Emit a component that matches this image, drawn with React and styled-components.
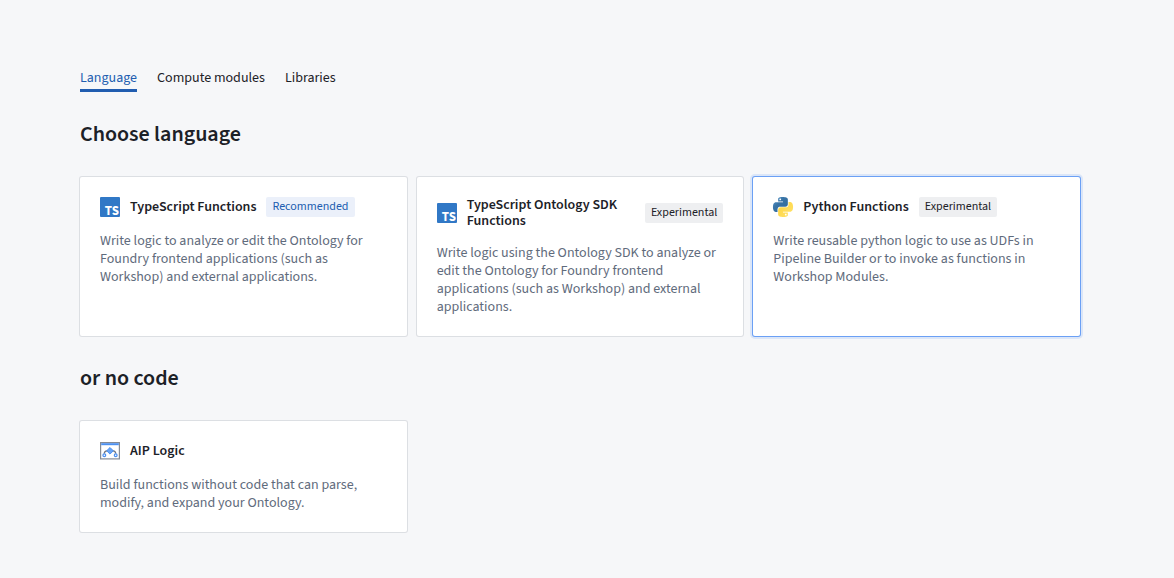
import React, { useState } from "react";
import styled, { createGlobalStyle } from "styled-components";

const GlobalStyle = createGlobalStyle`
	*, *::before, *::after {
		box-sizing: border-box;
	}

	body {
		margin: 0;
		background: #f6f7f9;
		color: #1c2127;
		font-family: "Source Sans 3", "Noto Sans CJK SC", "Open Sans", sans-serif;
		font-size: 14px;
		line-height: 18px;
	}

	button {
		font: inherit;
		color: inherit;
	}
`;

const Page = styled.main`
	padding: 64px 94px 46px 80px;
`;

const TabList = styled.div`
	display: flex;
	gap: 20px;
`;

const Tab = styled.button`
	padding: 0;
	border: 0;
	background: none;
	box-shadow: ${props => (props.$active ? "inset 0 -3px 0 #215db0" : "none")};
	color: ${props => (props.$active ? "#215db0" : "#1c2127")};
	line-height: 28px;
	cursor: pointer;
`;

const Heading = styled.h2`
	margin: 30px 0;
	font-size: 22px;
	font-weight: 600;
	line-height: 25px;
`;

const CardGrid = styled.div`
	display: grid;
	grid-template-columns: repeat(3, minmax(0, 1fr));
	gap: 10px;
`;

const Card = styled.button`
	display: flex;
	flex-direction: column;
	gap: 15px;
	padding: 20px;
	border: 0;
	border-radius: 2px;
	background: #ffffff;
	box-shadow: ${props =>
		props.$selected
			? "0 0 0 1px #6ba0f5, 0 0 0 3px #dbe6f8"
			: "0 0 0 1px #dcdfe3"};
	text-align: left;
	cursor: pointer;
`;

const CardHeader = styled.span`
	display: flex;
	align-items: center;
	gap: 10px;
`;

const IconSlot = styled.span`
	display: flex;
	flex: none;
	width: 20px;
	height: 20px;

	svg {
		width: 20px;
		height: 20px;
		overflow: visible;
	}
`;

const Title = styled.span`
	font-weight: 600;
	line-height: 16px;
`;

const Tag = styled.span`
	flex: none;
	padding: 2px 6px;
	border-radius: 2px;
	background: ${props => (props.$primary ? "#ebf0fa" : "#eeeff1")};
	color: ${props => (props.$primary ? "#215db0" : "#1c2127")};
	font-size: 12px;
	line-height: 16px;
`;

const Description = styled.span`
	color: #5f6b7c;
`;

const LogoText = styled.text`
	fill: #ffffff;
	font-size: 13px;
	font-weight: 700;
	text-anchor: end;
`;

const TypeScriptLogo = () => (
	<svg viewBox="0 0 20 20" aria-hidden="true">
		<rect width="20" height="20" rx="1" fill="#3178c6" />
		<LogoText x="19" y="18">
			TS
		</LogoText>
	</svg>
);

const PythonLogo = () => (
	<svg viewBox="0 0 24 24" aria-hidden="true">
		<defs>
			<linearGradient id="python-blue" x1="0" y1="0" x2="1" y2="1">
				<stop offset="0" stopColor="#5a9fd4" />
				<stop offset="0.4" stopColor="#3973a5" />
				<stop offset="1" stopColor="#306998" />
			</linearGradient>
			<linearGradient id="python-yellow" x1="0" y1="0" x2="1" y2="1">
				<stop offset="0" stopColor="#ffd43b" />
				<stop offset="1" stopColor="#ffe36f" />
			</linearGradient>
		</defs>
		<path
			fill="url(#python-blue)"
			d="M14.25.18l.9.2.73.26.59.3.45.32.34.34.25.34.16.33.1.3.04.26.02.2-.01.13V8.5l-.05.63-.13.55-.21.46-.26.38-.3.31-.33.25-.35.19-.35.14-.33.1-.3.07-.26.04-.21.02H8.77l-.69.05-.59.14-.5.22-.41.27-.33.32-.27.35-.2.36-.15.37-.1.35-.07.32-.04.27-.02.21v3.06H3.17l-.21-.03-.28-.07-.32-.12-.35-.18-.36-.26-.36-.36-.35-.46-.32-.59-.28-.73-.21-.88-.14-1.05-.05-1.23.06-1.22.16-1.04.24-.87.32-.71.36-.57.4-.44.42-.33.42-.24.4-.16.36-.1.32-.05.24-.01h.16l.06.01h8.16v-.83H6.18l-.01-2.75-.02-.37.05-.34.11-.31.17-.28.25-.26.31-.23.38-.2.44-.18.51-.15.58-.12.64-.1.71-.06.77-.04.84-.02 1.27.05zm-6.3 1.98l-.23.33-.08.41.08.41.23.34.33.22.41.09.41-.09.33-.22.23-.34.08-.41-.08-.41-.23-.33-.33-.22-.41-.09-.41.09z"
		/>
		<path
			fill="url(#python-yellow)"
			d="M21.04 6.11l.28.06.32.12.35.18.36.27.36.35.35.47.32.59.28.73.21.88.14 1.04.05 1.23-.06 1.23-.16 1.04-.24.86-.32.71-.36.57-.4.45-.42.33-.42.24-.4.16-.36.09-.32.05-.24.02-.16-.01h-8.22v.82h5.84l.01 2.76.02.36-.05.34-.11.31-.17.29-.25.25-.31.24-.38.2-.44.17-.51.15-.58.13-.64.09-.71.07-.77.04-.84.01-1.27-.04-1.07-.14-.9-.2-.73-.25-.59-.3-.45-.33-.34-.34-.25-.34-.16-.33-.1-.3-.04-.25-.02-.2.01-.13v-5.34l.05-.64.13-.54.21-.46.26-.38.3-.32.33-.24.35-.2.35-.14.33-.1.3-.06.26-.04.21-.02.13-.01h5.84l.69-.05.59-.14.5-.21.41-.28.33-.32.27-.35.2-.36.15-.36.1-.35.07-.32.04-.28.02-.21V6.07h2.09l.14.01zm-6.47 14.25l-.23.33-.08.41.08.41.23.33.33.23.41.08.41-.08.33-.23.23-.33.08-.41-.08-.41-.23-.33-.33-.23-.41-.08-.41.08z"
		/>
	</svg>
);

// window frame with a diamond node branching to two round ones
const AipLogicIcon = () => (
	<svg viewBox="0 0 20 20" fill="none" aria-hidden="true">
		<rect x="0.6" y="1.6" width="18.8" height="16.3" fill="#ffffff" stroke="#858b95" strokeWidth="1.2" />
		<rect x="1.2" y="2.2" width="17.6" height="2" fill="#4c90f0" />
		<path d="M8 9.8H7C5 9.8 4.3 11 4.3 12.8M12 9.8h1c2 0 2.7 1.2 2.7 3" stroke="#6b7380" strokeWidth="1.3" />
		<path d="M10 6.5l3.3 3.3-3.3 3.3-3.3-3.3z" fill="#68a4f6" stroke="#4c90f0" strokeWidth="1" />
		<circle cx="4.3" cy="14.2" r="1.4" fill="#ffffff" stroke="#4c90f0" strokeWidth="1.2" />
		<circle cx="15.7" cy="14.2" r="1.4" fill="#ffffff" stroke="#4c90f0" strokeWidth="1.2" />
	</svg>
);

const tabs = ["Language", "Compute modules", "Libraries"];

const languages = [
	{
		id: "typescript",
		title: "TypeScript Functions",
		icon: <TypeScriptLogo />,
		tag: "Recommended",
		primary: true,
		text:
			"Write logic to analyze or edit the Ontology for Foundry frontend applications (such as Workshop) and external applications."
	},
	{
		id: "typescript-osdk",
		title: "TypeScript Ontology SDK Functions",
		icon: <TypeScriptLogo />,
		tag: "Experimental",
		text:
			"Write logic using the Ontology SDK to analyze or edit the Ontology for Foundry frontend applications (such as Workshop) and external applications."
	},
	{
		id: "python",
		title: "Python Functions",
		icon: <PythonLogo />,
		tag: "Experimental",
		text:
			"Write reusable python logic to use as UDFs in Pipeline Builder or to invoke as functions in Workshop Modules."
	}
];

const noCode = [
	{
		id: "aip-logic",
		title: "AIP Logic",
		icon: <AipLogicIcon />,
		text:
			"Build functions without code that can parse, modify, and expand your Ontology."
	}
];

const OptionCard = ({ option, selected, onSelect }) => (
	<Card
		type="button"
		aria-pressed={selected}
		$selected={selected}
		onClick={() => onSelect(option.id)}
	>
		<CardHeader>
			<IconSlot>{option.icon}</IconSlot>
			<Title>{option.title}</Title>
			{option.tag ? <Tag $primary={option.primary}>{option.tag}</Tag> : null}
		</CardHeader>
		<Description>{option.text}</Description>
	</Card>
);

const App = () => {
	const [tab, setTab] = useState("Language");
	const [selected, setSelected] = useState("python");

	const renderCards = options => (
		<CardGrid>
			{options.map(option => (
				<OptionCard
					key={option.id}
					option={option}
					selected={selected === option.id}
					onSelect={setSelected}
				/>
			))}
		</CardGrid>
	);

	return (
		<Page>
			<GlobalStyle />
			<TabList role="tablist">
				{tabs.map(name => (
					<Tab
						key={name}
						type="button"
						role="tab"
						aria-selected={tab === name}
						$active={tab === name}
						onClick={() => setTab(name)}
					>
						{name}
					</Tab>
				))}
			</TabList>
			<Heading>Choose language</Heading>
			{renderCards(languages)}
			<Heading>or no code</Heading>
			{renderCards(noCode)}
		</Page>
	);
};

export default App;
